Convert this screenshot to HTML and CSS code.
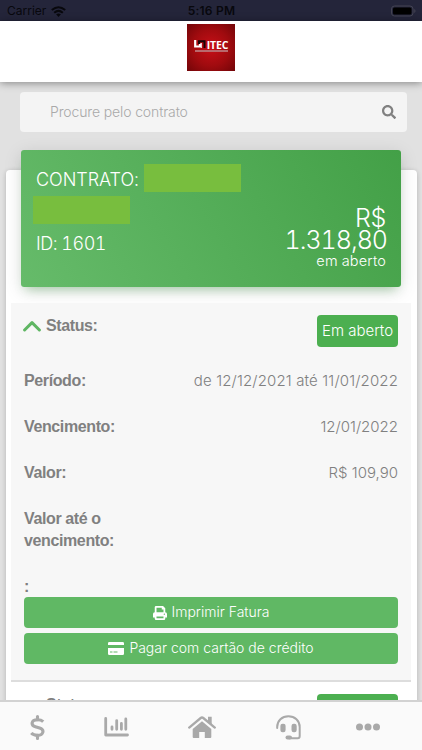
FILE: index.html
```html
<!DOCTYPE html>
<html lang="pt-BR">
<head>
<meta charset="utf-8">
<meta name="viewport" content="width=device-width, initial-scale=1">
<title>Contrato</title>
<link rel="stylesheet" href="styles.css">
</head>
<body>
<div class="app">
  <div class="status">
    <span class="carrier">Carrier
      <svg width="15" height="11" viewBox="0 0 15 11" fill="none" stroke="#08080d" stroke-width="2"><path d="M.8 4.1Q7.5-1.7 14.2 4.1M3.2 6.7q4.3-3.6 8.6 0"/><path d="M5.1 8.3q2.4-1.8 4.8 0L7.5 11z" fill="#08080d" stroke="none"/></svg>
    </span>
    <span class="clock">5:16 PM</span>
    <svg class="battery" width="25" height="12" viewBox="0 0 25 12"><rect x=".5" y="1" width="21.5" height="10" rx="3" fill="none" stroke="#444453"/><rect x="2" y="2.500" width="18.5" height="7" rx="1.6" fill="#000"/><path d="M23.3 4v4q1.2-.5 1.2-2t-1.2-2" fill="#444453"/></svg>
  </div>
  <header class="header">
    <div class="logo"><span class="mark"><svg width="12" height="9" viewBox="0 0 12 9" fill="none"><path d="M1.200 0v6.500H6V3.500" stroke="#fff" stroke-width="2.200"/><path d="M5 4V1.200h5.500V8" stroke="#160507" stroke-width="2"/><path d="M7.300 3v5" stroke="#fff" stroke-width="1"/></svg>ITEC</span><i class="tagline"></i></div>
  </header>
  <main class="main">
    <div class="search"><span>Procure pelo contrato</span>
      <svg width="14" height="14" viewBox="0 0 512 512" fill="#808080"><path d="M505 442.700 405.300 343c-4.500-4.500-10.600-7-17-7H372c27.600-35.300 44-79.700 44-128C416 93.100 322.900 0 208 0S0 93.100 0 208s93.100 208 208 208c48.300 0 92.700-16.400 128-44v16.300c0 6.400 2.500 12.500 7 17l99.700 99.700c9.400 9.400 24.600 9.400 33.900 0l28.300-28.300c9.400-9.400 9.400-24.600.1-34zM208 336c-70.700 0-128-57.200-128-128 0-70.700 57.200-128 128-128 70.700 0 128 57.200 128 128 0 70.700-57.200 128-128 128z"/></svg>
    </div>
    <section class="card">
      <div class="contract">
        <div class="line"><span class="title">CONTRATO:</span><i class="mask"></i></div>
        <i class="mask second"></i>
        <div class="bottom">
          <span class="id">ID: 1601</span>
          <div class="total"><span class="money">R$</span><span class="money amount">1.318,80</span><span class="open">em aberto</span></div>
        </div>
      </div>
      <div class="invoice">
        <div class="row first"><b class="toggle"><svg width="18" height="12" viewBox="0 0 18 12" fill="none" stroke="#5fb663" stroke-width="3" stroke-linecap="round" stroke-linejoin="round"><path d="M1.600 10 9 2.600l7.400 7.400"/></svg>Status:</b><span class="badge">Em aberto</span></div>
        <div class="row"><b>Período:</b><span class="value period">de 12/12/2021 até 11/01/2022</span></div>
        <div class="row"><b>Vencimento:</b><span class="value">12/01/2022</span></div>
        <div class="row"><b>Valor:</b><span class="value">R$ 109,90</span></div>
        <div class="row tall"><b>Valor até o<br>vencimento:</b></div>
        <div class="row colon"><b>:</b></div>
        <button class="btn print"><svg width="14" height="14" viewBox="0 0 16 16"><path fill="#fff" fill-rule="evenodd" d="M2 7V1.500Q2 0 3.500 0h8L14 2.500V7q2 0 2 2v4h-2v1.500q0 1.500-1.500 1.500h-9Q2 16 2 14.500V13H0V9q0-2 2-2zm2-5v5h8V4h-2V2zm0 10v2h8v-2zm9-3.500a.8.8 0 1 0 0 1.600.8.8 0 0 0 0-1.600z"/></svg><span>Imprimir Fatura</span></button>
        <button class="btn pay"><svg width="16" height="13" viewBox="0 0 16 13"><path fill="#fff" fill-rule="evenodd" d="M0 3V1.300Q0 0 1.300 0h13.400Q16 0 16 1.300V3zm0 3h16v5.700q0 1.300-1.300 1.300H1.300Q0 13 0 11.700zm2 3.500v1h2.500v-1zm3.500 0v1h4v-1z"/></svg><span>Pagar com cartão de crédito</span></button>
      </div>
      <div class="next"><b>Status:</b><span class="badge">Em aberto</span></div>
    </section>
  </main>
  <nav class="nav">
    <a><svg width="15" height="25" viewBox="0 0 14 24" fill="none" stroke="#a9a9a9" stroke-width="3"><path d="M12.500 6.300Q10.500 4.500 7 4.500c-6.500 0-6.500 5.500-2 6.700l4 1.200c5 1.600 4 7.100-2 7.100q-4 0-6-2.200"/><path d="M7 1.500v3M7 19.500v3" stroke-linecap="round"/></svg></a>
    <a><svg width="25" height="20" viewBox="0 0 25 20" fill="none" stroke="#a9a9a9" stroke-width="2.800" stroke-linecap="round" stroke-linejoin="round"><path d="M1.700 1.500v16.500h21.800"/><path d="M8 10v2.300M12.700 3.600v8.700M17.400 6.500v5.800M21.800 2v10.300"/></svg></a>
    <a><svg width="28" height="22" viewBox="0 0 28 22"><path d="M1.200 11.600 12.700 2q1.300-1 2.600 0l11.500 9.600" fill="none" stroke="#a9a9a9" stroke-width="2.300" stroke-linecap="round"/><path d="M20 .8h3.700v8L20 5zM14 5.300l9.300 7.700V21q0 1-1 1h-5.500v-6h-5.600v6h-5.500q-1 0-1-1v-8z" fill="#a9a9a9"/></svg></a>
    <a><svg width="25" height="25" viewBox="0 0 25 25"><path d="M1.200 13v-1C1.200 5.700 6 1.200 12.400 1.200S23.700 5.700 23.700 12v9q0 2.300-2 2.300H13" fill="none" stroke="#a9a9a9" stroke-width="2" stroke-linecap="round"/><rect x="4.400" y="8.700" width="5.200" height="8.600" rx="2.200" fill="#a9a9a9"/><rect x="15.500" y="8.700" width="5.200" height="8.600" rx="2.200" fill="#a9a9a9"/><rect x="9.500" y="20.400" width="6.500" height="4.200" rx="2.100" fill="#a9a9a9"/></svg></a>
    <a><svg width="24" height="8" viewBox="0 0 24 8" fill="#a9a9a9"><circle cx="3.500" cy="4" r="3.500"/><circle cx="12" cy="4" r="3.500"/><circle cx="20.500" cy="4" r="3.500"/></svg></a>
  </nav>
</div>
</body>
</html>
```
FILE: styles.css
```css
* { box-sizing: border-box; }
body { margin: 0; font-family: "Liberation Sans", sans-serif; }
.app { width: 422px; height: 750px; display: flex; flex-direction: column; overflow: hidden; background: #e1e1e1; }
.status { height: 20.500px; flex: none; background: #24253a; color: #08080d; display: grid; grid-template-columns: 1fr auto 1fr; align-items: center; padding: 2px 6px 0 7px; font: 12px/18px Inter, sans-serif; }
.carrier { display: flex; align-items: center; gap: 5px; }
.clock { font-weight: 600; letter-spacing: .2px; }
.battery { justify-self: end; }
.header { height: 61px; flex: none; position: relative; z-index: 1; background: #fff; box-shadow: 0 1px 8px rgba(0,0,0,.42); display: flex; justify-content: center; align-items: flex-start; padding-top: 3px; }
.logo { width: 48px; height: 47px; background: radial-gradient(circle, #c80f17, #a00b0f 55%, #710508); display: flex; flex-direction: column; align-items: center; padding-top: 16px; }
.mark { display: flex; align-items: center; gap: 1px; height: 10px; color: #fff; font: bold 10.500px/10px "Open Sans", sans-serif; letter-spacing: -.2px; }
.tagline { width: 33px; height: 2px; margin-top: 0; background: #b9696d; }
.main { flex: 1; min-height: 0; padding: 10.500px 5.500px 0; overflow: hidden; }
.search { height: 40px; margin: 0 10px 0 14.500px; padding: 0 11px 0 30px; border-radius: 4px; background: #f4f4f4; display: flex; align-items: center; justify-content: space-between; color: #a9a9a9; font: 300 14px Inter, sans-serif; letter-spacing: -.13px; }
.search span { margin-top: -1px; }
.search svg { margin-top: -1px; }
.card { height: 545px; margin-top: 38px; border-radius: 4px; background: #fff; box-shadow: 0 1px 5px rgba(0,0,0,.2); padding: 0 5.500px; display: flex; flex-direction: column; }
.contract { height: 137px; flex: none; margin: -20px 10px 0; padding: 14px 15px; border-radius: 3px; background: linear-gradient(60deg, #66bb6a, #43a047); box-shadow: 0 4px 18px rgba(0,0,0,.13), 0 7px 10px -5px rgba(76,175,80,.4); color: #fff; font-family: Inter, sans-serif; font-weight: 300; font-feature-settings: "tnum"; }
.line { height: 28px; display: flex; align-items: center; }
.title { width: 108px; font-size: 18px; letter-spacing: -.05px; white-space: nowrap; margin-top: 2px; }
.mask { display: block; width: 97px; height: 28px; background: #78be3e; }
.second { margin: 4px 0 0 -3px; }
.bottom { display: flex; justify-content: space-between; }
.id { font-size: 18px; line-height: 22px; margin-top: 9px; letter-spacing: -.5px; }
.total { display: flex; flex-direction: column; align-items: flex-end; margin-top: -17px; }
.money { font-size: 25px; line-height: 22px; letter-spacing: -.35px; }
.amount { letter-spacing: -1px; margin-right: -1px; }
.open { font-size: 14.500px; line-height: 18px; margin-top: 1px; letter-spacing: .15px; }
.invoice { height: 378.500px; flex: none; margin-top: 16px; padding: 0 13px; background: #f7f7f7; border-bottom: 2px solid #ddd; display: flex; flex-direction: column; }
.row { height: 46px; flex: none; display: flex; justify-content: space-between; line-height: 22px; padding-top: 10px; color: #808080; font-size: 16px; }
.row.first { height: 57px; padding-top: 12px; }
.row.tall { height: 68px; }
.row.colon { height: 31px; padding-top: 10px; line-height: 21px; }
b { letter-spacing: -.38px; }
.toggle { display: flex; gap: 5px; height: 22px; margin: 0 0 0 -1px; }
.toggle svg { margin-top: 5px; }
.value { font-family: Inter, sans-serif; font-weight: 300; font-size: 15px; color: #808080; }
.period { letter-spacing: .14px; }
.badge { width: 81px; height: 32px; border-radius: 4px; background: #4caf50; color: #fff; text-align: center; font: 300 15px/31px Inter, sans-serif; }
.btn { height: 31px; flex: none; margin: 0 0 4.500px; padding: 0; border: 0; border-radius: 4px; background: #60b864; color: #fff; display: flex; align-items: center; justify-content: center; gap: 5px; font: 300 14px Inter, sans-serif; }
.btn span { margin-top: -2px; }
.next { display: flex; justify-content: space-between; flex: none; padding: 12px 13px 0 35px; color: #808080; }
.next b { margin-top: 2px; }
.nav { height: 50.500px; flex: none; background: #fafafa; border-top: 2px solid #d2d2d2; display: grid; grid-template-columns: 74px 84px 88px 84px 76px; align-items: center; justify-items: center; position: relative; z-index: 2; padding-top: 3px; }
.nav a { display: flex; }
```
